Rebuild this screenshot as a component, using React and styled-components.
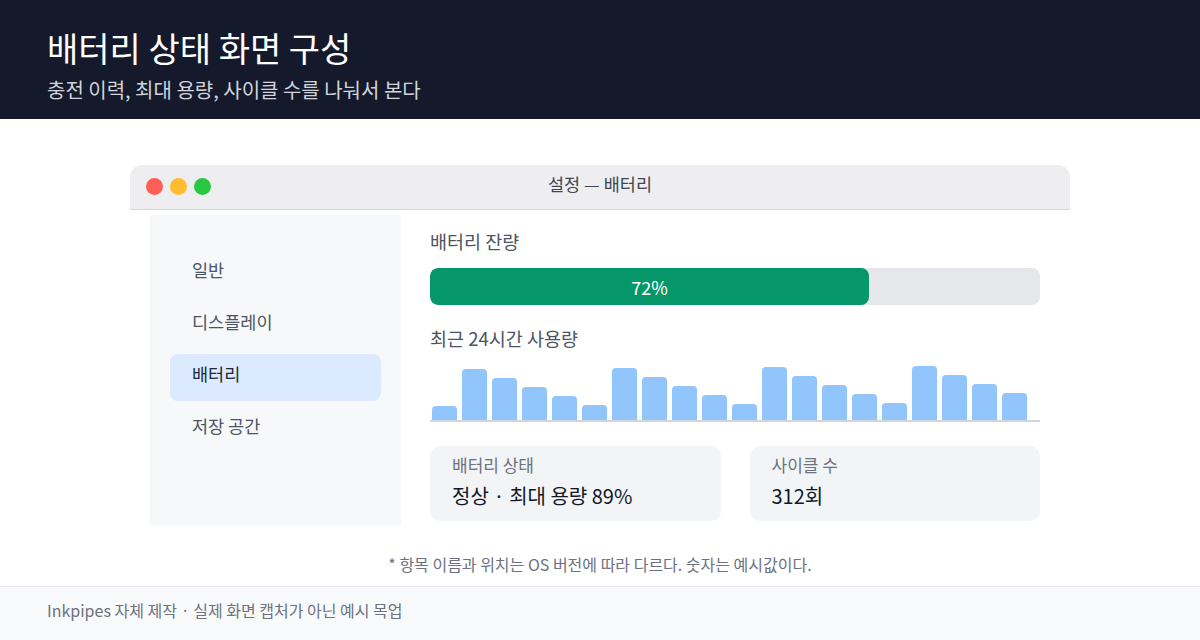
import React from "react";
import styled, { createGlobalStyle } from "styled-components";

const Global = createGlobalStyle`
  html, body { margin: 0; padding: 0; background: #ffffff; }
  body { font-family: "Noto Sans CJK KR", "Noto Sans", sans-serif; }
  * { box-sizing: border-box; }
`;

const Page = styled.div`
  width: 1200px;
  height: 640px;
  display: flex;
  flex-direction: column;
  overflow: hidden;
`;

const Header = styled.header`
  background: #141a2b;
  height: 119px;
  padding: 26px 47px 0;
  display: flex;
  flex-direction: column;
`;

const Title = styled.h1`
  margin: 0;
  font-size: 34px;
  line-height: 44px;
  font-weight: 400;
  color: #ffffff;
`;

const Subtitle = styled.p`
  margin: 6px 0 0;
  font-size: 20px;
  line-height: 28px;
  color: #d1d5db;
`;

const Stage = styled.main`
  flex: 1;
  display: flex;
  flex-direction: column;
  align-items: center;
  padding-top: 46px;
`;

const Window = styled.section`
  width: 940px;
  background: #ffffff;
  border-radius: 12px 12px 0 0;
  display: flex;
  flex-direction: column;
`;

const TitleBar = styled.div`
  position: relative;
  height: 45px;
  background: #eeeef0;
  border-radius: 12px 12px 0 0;
  border-bottom: 1px solid #d4d6dc;
  display: flex;
  align-items: center;
  justify-content: center;
`;

const Lights = styled.div`
  position: absolute;
  left: 16px;
  top: 13px;
  display: flex;
  gap: 7px;
`;

const Light = styled.span`
  width: 17px;
  height: 17px;
  border-radius: 50%;
  background: ${(p) => p.$c};
`;

const WindowTitle = styled.div`
  font-size: 17.5px;
  line-height: 24px;
  color: #3f4652;
  margin-top: -6px;
`;

const Body = styled.div`
  display: grid;
  grid-template-columns: 251px 1fr;
  column-gap: 29px;
  padding: 5px 30px 0 20px;
`;

const Sidebar = styled.nav`
  background: #f7f8fa;
  height: 311px;
  padding: 35px 20px 0;
  display: flex;
  flex-direction: column;
  gap: 5px;
`;

const NavItem = styled.div`
  height: 47px;
  border-radius: 8px;
  padding: 0 0 9px 22px;
  display: flex;
  align-items: center;
  font-size: 17.5px;
  color: ${(p) => (p.$active ? "#1f2937" : "#4b5563")};
  background: ${(p) => (p.$active ? "#dbeafe" : "transparent")};
`;

const Content = styled.div`
  display: flex;
  flex-direction: column;
  padding-top: 14px;
`;

const SectionLabel = styled.div`
  font-size: 18.5px;
  line-height: 24px;
  color: #4b5563;
`;

const Track = styled.div`
  margin-top: 15px;
  height: 37px;
  border-radius: 8px;
  background: #e5e7eb;
  overflow: hidden;
  display: flex;
`;

const Fill = styled.div`
  height: 100%;
  background: #059669;
  border-radius: 8px;
  display: flex;
  align-items: center;
  justify-content: center;
  color: #ffffff;
  font-size: 18px;
`;

const ChartLabel = styled(SectionLabel)`
  margin-top: 21px;
`;

const Chart = styled.div`
  margin-top: 16px;
  height: 56px;
  display: flex;
  align-items: flex-end;
  gap: 5px;
  padding: 0 2px;
  border-bottom: 2px solid #d1d5db;
`;

const Bar = styled.div`
  width: 25px;
  background: #93c5fd;
  border-radius: 4px 4px 0 0;
`;

const Cards = styled.div`
  margin-top: 24px;
  display: grid;
  grid-template-columns: 1fr 1fr;
  gap: 29px;
`;

const Card = styled.div`
  height: 75px;
  background: #f3f4f6;
  border-radius: 10px;
  padding: 8px 22px 0;
  display: flex;
  flex-direction: column;
`;

const CardLabel = styled.div`
  font-size: 17px;
  line-height: 22px;
  color: #6b7280;
`;

const CardValue = styled.div`
  margin-top: 7px;
  font-size: 20px;
  line-height: 26px;
  color: #111827;
`;

const Dot = styled.span`
  font-family: "Noto Sans", "Liberation Sans", sans-serif;
  padding: 0 0.15em;
`;

const Note = styled.p`
  margin: 28px 0 0;
  font-size: 16px;
  line-height: 20px;
  color: #6b7280;
  text-align: center;
`;

const Footer = styled.footer`
  height: 54px;
  background: #f9fafb;
  border-top: 1px solid #e5e7eb;
  padding: 12px 47px 0;
  font-size: 16px;
  line-height: 22px;
  color: #6b7280;
`;

const usage = [14, 51, 42, 33, 24, 15, 52, 43, 34, 25, 16, 53, 44, 35, 26, 17, 54, 45, 36, 27];
const nav = ["일반", "디스플레이", "배터리", "저장 공간"];

export default function App() {
  return (
    <Page>
      <Global />
      <Header>
        <Title>배터리 상태 화면 구성</Title>
        <Subtitle>충전 이력, 최대 용량, 사이클 수를 나눠서 본다</Subtitle>
      </Header>
      <Stage>
        <Window>
          <TitleBar>
            <Lights>
              <Light $c="#ff5f57" />
              <Light $c="#febc2e" />
              <Light $c="#28c840" />
            </Lights>
            <WindowTitle>설정 — 배터리</WindowTitle>
          </TitleBar>
          <Body>
            <Sidebar>
              {nav.map((n) => (
                <NavItem key={n} $active={n === "배터리"}>
                  {n}
                </NavItem>
              ))}
            </Sidebar>
            <Content>
              <SectionLabel>배터리 잔량</SectionLabel>
              <Track>
                <Fill style={{ width: "72%" }}>72%</Fill>
              </Track>
              <ChartLabel>최근 24시간 사용량</ChartLabel>
              <Chart>
                {usage.map((h, i) => (
                  <Bar key={i} style={{ height: `${h}px` }} />
                ))}
              </Chart>
              <Cards>
                <Card>
                  <CardLabel>배터리 상태</CardLabel>
                  <CardValue>
                    정상 <Dot>·</Dot> 최대 용량 89%
                  </CardValue>
                </Card>
                <Card>
                  <CardLabel>사이클 수</CardLabel>
                  <CardValue>312회</CardValue>
                </Card>
              </Cards>
            </Content>
          </Body>
        </Window>
        <Note>* 항목 이름과 위치는 OS 버전에 따라 다르다. 숫자는 예시값이다.</Note>
      </Stage>
      <Footer>
        Inkpipes 자체 제작 <Dot>·</Dot> 실제 화면 캡처가 아닌 예시 목업
      </Footer>
    </Page>
  );
}
